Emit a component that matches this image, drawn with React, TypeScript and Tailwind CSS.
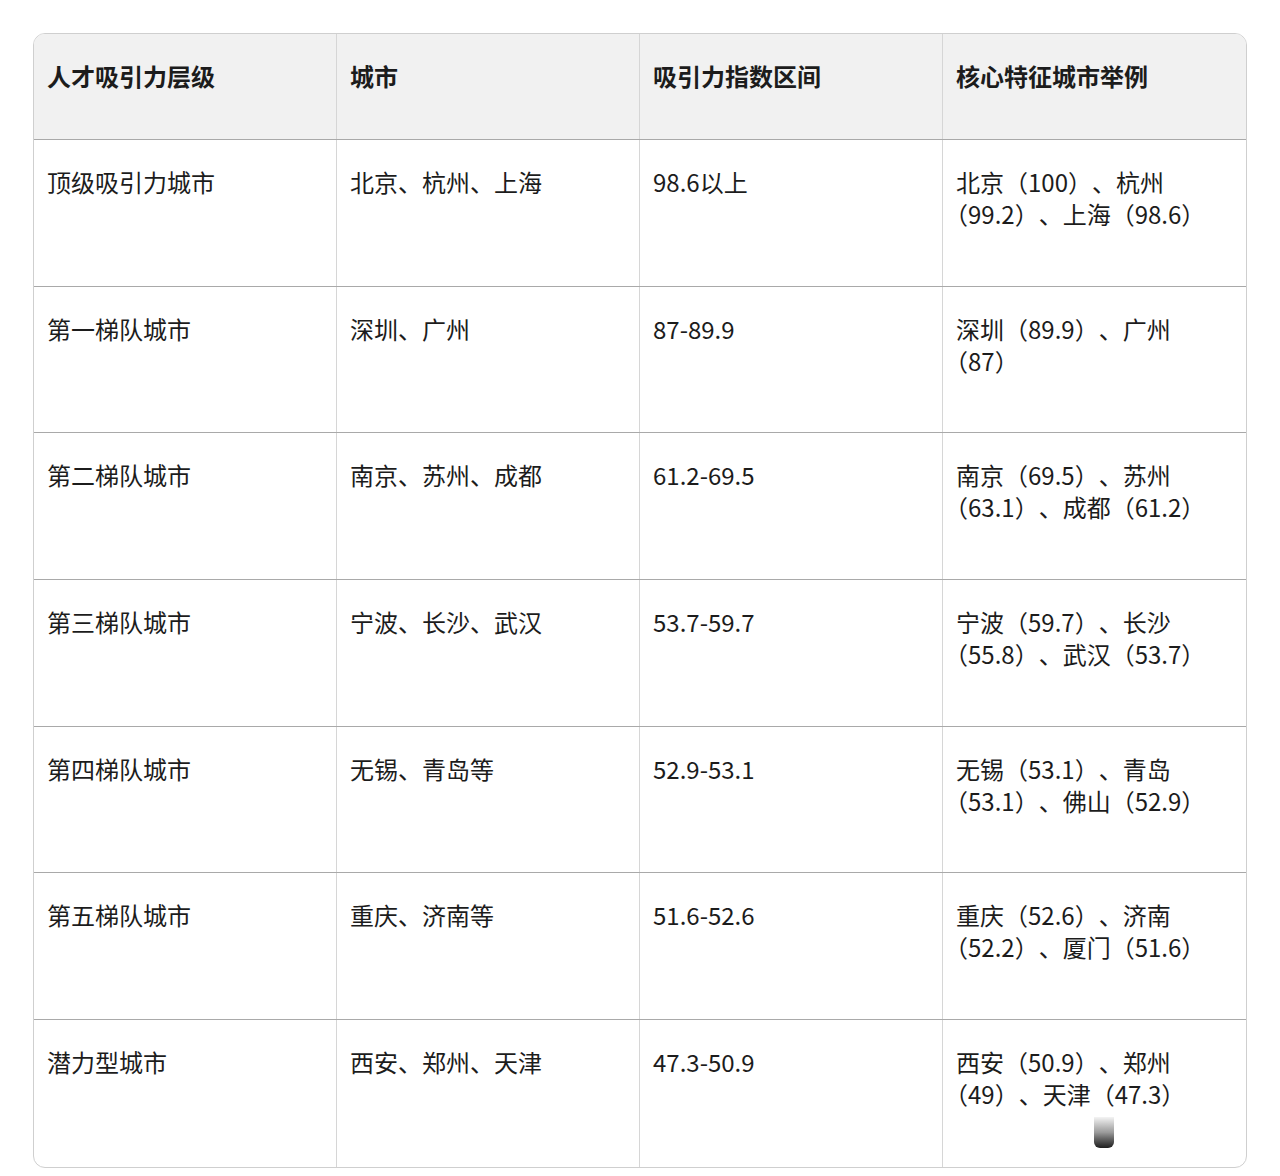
const header = ["人才吸引力层级", "城市", "吸引力指数区间", "核心特征城市举例"];

// last column is split by hand where the reference wraps
const rows: { h: string; cells: string[]; ex: [string, string] }[] = [
  { h: "h-[147px]", cells: ["顶级吸引力城市", "北京、杭州、上海", "98.6以上"], ex: ["北京（100）、杭州", "（99.2）、上海（98.6）"] },
  { h: "h-[146px]", cells: ["第一梯队城市", "深圳、广州", "87-89.9"], ex: ["深圳（89.9）、广州", "（87）"] },
  { h: "h-[147px]", cells: ["第二梯队城市", "南京、苏州、成都", "61.2-69.5"], ex: ["南京（69.5）、苏州", "（63.1）、成都（61.2）"] },
  { h: "h-[147px]", cells: ["第三梯队城市", "宁波、长沙、武汉", "53.7-59.7"], ex: ["宁波（59.7）、长沙", "（55.8）、武汉（53.7）"] },
  { h: "h-[146px]", cells: ["第四梯队城市", "无锡、青岛等", "52.9-53.1"], ex: ["无锡（53.1）、青岛", "（53.1）、佛山（52.9）"] },
  { h: "h-[147px]", cells: ["第五梯队城市", "重庆、济南等", "51.6-52.6"], ex: ["重庆（52.6）、济南", "（52.2）、厦门（51.6）"] },
  { h: "h-[147px]", cells: ["潜力型城市", "西安、郑州、天津", "47.3-50.9"], ex: ["西安（50.9）、郑州", "（49）、天津（47.3）"] },
];

const cell = "pt-[26px] px-[13px] text-[24px] leading-[32px] [text-spacing-trim:space-all]";

export default function App() {
  return (
    <div className="relative w-[1280px] h-[1176px] bg-white pt-[33px] pl-[33px] font-['Noto_Sans_CJK_SC',sans-serif] text-[#1c1c1c]">
      <div className="w-[1214px] border border-[#cfcfcf] rounded-[12px] overflow-hidden">
        {/* header */}
        <div className="grid grid-cols-4 h-[106px] bg-[#f1f1f1] border-b border-[#a9a9a9]">
          {header.map((t, i) => (
            <div key={t} className={`${cell} font-bold ${i < 3 ? "border-r border-[#d6d6d6]" : ""}`}>
              {t}
            </div>
          ))}
        </div>

        {rows.map((r, ri) => (
          <div key={ri} className={`grid grid-cols-4 ${r.h} ${ri < rows.length - 1 ? "border-b border-[#a9a9a9]" : ""}`}>
            {r.cells.map((c, i) => (
              <div key={i} className={`${cell} border-r border-[#d6d6d6]`}>
                {c}
              </div>
            ))}
            <div className={`${cell} whitespace-nowrap`}>
              {r.ex[0]}
              <br />
              <span className="ml-[-12px]">{r.ex[1]}</span>
            </div>
          </div>
        ))}
      </div>

      {/* watermark bit */}
      <div className="absolute left-[1094px] top-[1117px] w-[20px] h-[31px] rounded-b-[6px] bg-gradient-to-b from-[#f4f4f4] via-[#9a9a9a] to-[#1f1f1f]" />
    </div>
  );
}
